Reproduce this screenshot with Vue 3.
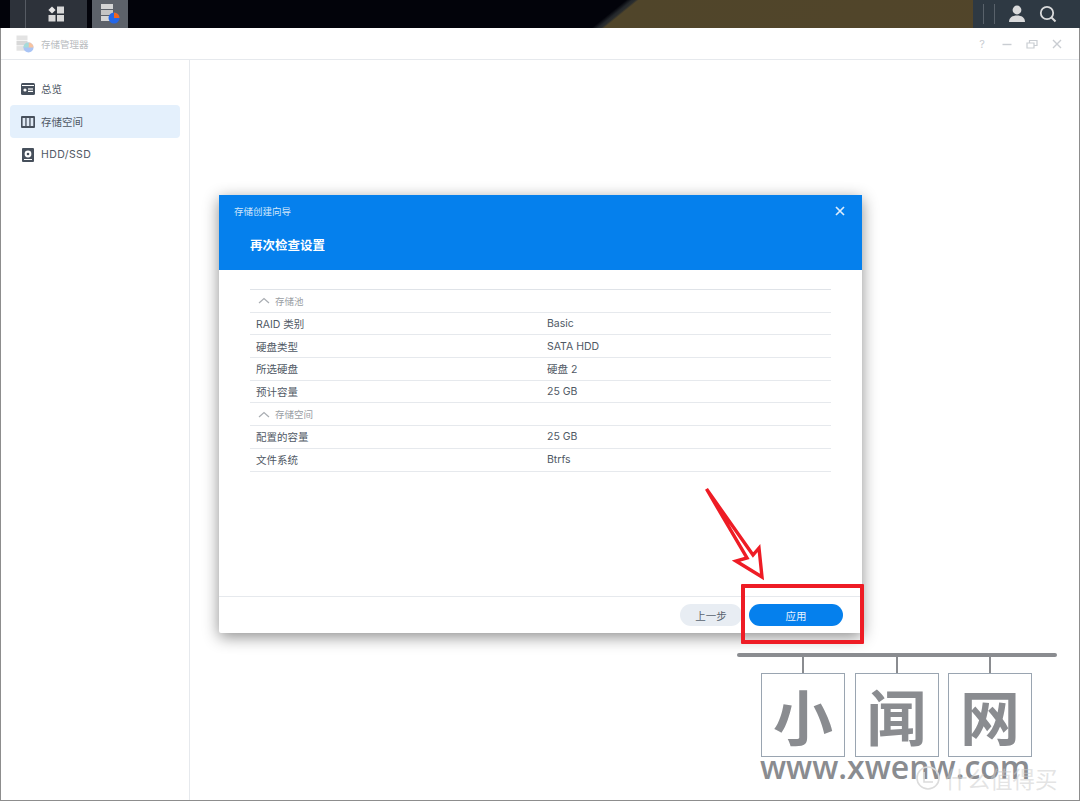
<script setup>
const menu = [
  { id: "overview", label: "总览" },
  { id: "storage", label: "存储空间", active: true },
  { id: "hdd", label: "HDD/SSD" }
];

const sections = [
  {
    title: "存储池",
    rows: [
      ["RAID 类别", "Basic"],
      ["硬盘类型", "SATA HDD"],
      ["所选硬盘", "硬盘 2"],
      ["预计容量", "25 GB"]
    ]
  },
  {
    title: "存储空间",
    rows: [
      ["配置的容量", "25 GB"],
      ["文件系统", "Btrfs"]
    ]
  }
];

const logoChars = ["小", "闻", "网"];
</script>

<template>
  <div class="page">
    <!-- barre du haut -->
    <header class="taskbar">
      <div class="task-group">
        <span class="task-sep"></span>
        <div class="task-main">
          <svg width="18" height="16" viewBox="0 0 18 16">
            <path d="M5 0.5 L8.6 4 L5 7.5 L1.4 4Z" fill="#e6e6e6" />
            <rect x="10" y="0.5" width="7" height="7" fill="#d8d8d8" />
            <rect x="1.5" y="9" width="7" height="6.5" fill="#d8d8d8" />
            <rect x="10" y="9" width="7" height="6.5" fill="#d8d8d8" />
          </svg>
        </div>
      </div>
      <div class="task-app">
        <svg width="20" height="22" viewBox="0 0 20 22">
          <rect x="1" y="1" width="12" height="5" fill="#d5d5d5" />
          <rect x="1" y="7" width="12" height="5" fill="#c4c4c4" />
          <rect x="1" y="13" width="12" height="5" fill="#d5d5d5" />
          <circle cx="14" cy="15" r="5.5" fill="#2467e8" />
          <path d="M14 9.5 A5.5 5.5 0 0 1 19.5 15 L14 15Z" fill="#f0651f" />
        </svg>
      </div>
      <div class="task-right">
        <span class="task-line"></span>
        <span class="task-line"></span>
        <svg class="task-user" width="18" height="18" viewBox="0 0 18 18">
          <circle cx="9" cy="5" r="4.4" fill="#d9dadb" />
          <path d="M1 17 C1 12.5 4.5 10.5 9 10.5 C13.5 10.5 17 12.5 17 17Z" fill="#d9dadb" />
        </svg>
        <svg class="task-search" width="18" height="18" viewBox="0 0 18 18">
          <circle cx="8" cy="8" r="6.2" fill="none" stroke="#d9dadb" stroke-width="1.8" />
          <path d="M12.5 12.5 L16.5 16.5" stroke="#d9dadb" stroke-width="2" />
        </svg>
      </div>
    </header>

    <div class="window">
      <div class="win-head">
        <svg class="win-logo" width="18" height="18" viewBox="0 0 18 18">
          <rect x="0.5" y="0.5" width="11" height="4.6" fill="#e3e3e3" />
          <rect x="0.5" y="5.8" width="11" height="4.6" fill="#d8d8d8" />
          <rect x="0.5" y="11.1" width="11" height="4.6" fill="#e3e3e3" />
          <circle cx="12.5" cy="12.5" r="5" fill="#a9c4f5" />
          <path d="M12.5 7.5 A5 5 0 0 1 17.5 12.5 L12.5 12.5Z" fill="#f7c3a0" />
          <path d="M7.5 12.5 A5 5 0 0 1 12.5 7.5 L12.5 12.5Z" fill="#a5dcd8" />
        </svg>
        <span class="win-title">存储管理器</span>
        <div class="win-actions">
          <span class="win-help">?</span>
          <svg width="12" height="12" viewBox="0 0 12 12"><path d="M1.5 6.5 H10.5" stroke="#c9cdd2" stroke-width="1.4" /></svg>
          <svg width="12" height="12" viewBox="0 0 12 12">
            <path d="M1 5 H8 V10 H1Z M3.5 4.5 V2.5 H11 V7.5 H8.5" fill="none" stroke="#c9cdd2" stroke-width="1.2" />
          </svg>
          <svg width="12" height="12" viewBox="0 0 12 12"><path d="M2 2 L10 10 M10 2 L2 10" stroke="#c9cdd2" stroke-width="1.4" /></svg>
        </div>
      </div>

      <div class="win-body">
        <aside class="sidebar">
          <div v-for="item in menu" :key="item.id" class="menu-item" :class="{ active: item.active, latin: item.id === 'hdd' }">
            <svg v-if="item.id === 'overview'" width="14" height="12" viewBox="0 0 14 12">
              <rect width="14" height="12" rx="1.5" fill="#47505c" />
              <rect x="1" y="2" width="12" height="1" fill="#fff" />
              <circle cx="4" cy="7" r="1.6" fill="#fff" />
              <rect x="7" y="5.4" width="5" height="1.2" fill="#fff" />
              <rect x="7" y="7.8" width="5" height="1.2" fill="#fff" />
            </svg>
            <svg v-else-if="item.id === 'storage'" width="14" height="12" viewBox="0 0 14 12">
              <rect width="14" height="12" rx="1" fill="#47505c" />
              <rect x="1.6" y="2" width="2.7" height="8" fill="#dfe9f4" />
              <rect x="5.6" y="2" width="2.7" height="8" fill="#dfe9f4" />
              <rect x="9.6" y="2" width="2.7" height="8" fill="#dfe9f4" />
            </svg>
            <svg v-else width="12" height="14" viewBox="0 0 12 14">
              <rect width="12" height="14" rx="1" fill="#47505c" />
              <circle cx="6" cy="6" r="3.4" fill="#fff" />
              <circle cx="6" cy="6" r="1.3" fill="#47505c" />
              <rect x="2" y="11" width="8" height="1" fill="#fff" />
            </svg>
            <span>{{ item.label }}</span>
          </div>
        </aside>
        <main class="content"></main>
      </div>
    </div>

    <!-- fenêtre de l'assistant -->
    <section class="dialog">
      <div class="dlg-head">
        <div class="dlg-top">
          <span class="dlg-small">存储创建向导</span>
          <svg width="10" height="10" viewBox="0 0 10 10"><path d="M1 1 L9 9 M9 1 L1 9" stroke="#dcecfc" stroke-width="1.7" /></svg>
        </div>
        <h2 class="dlg-title">再次检查设置</h2>
      </div>

      <div class="dlg-body">
        <div class="summary">
          <template v-for="section in sections" :key="section.title">
            <div class="row section-row">
              <svg width="12" height="7" viewBox="0 0 12 7"><path d="M1 6 L6 1.5 L11 6" fill="none" stroke="#a9adb2" stroke-width="1.2" /></svg>
              <span>{{ section.title }}</span>
            </div>
            <div v-for="row in section.rows" :key="row[0]" class="row">
              <span class="cell-label">{{ row[0] }}</span>
              <span>{{ row[1] }}</span>
            </div>
          </template>
        </div>
      </div>

      <div class="dlg-foot">
        <button class="btn btn-prev">上一步</button>
        <button class="btn btn-apply">应用</button>
      </div>
    </section>

    <!-- annotations rouges -->
    <svg class="arrow" width="70" height="100" viewBox="0 0 70 100">
      <path
        d="M2.5 3 L43 72 L32 75 L58 91 L55 62 L49 69Z"
        fill="#fff"
        stroke="#ee1c25"
        stroke-width="3.4"
        stroke-linejoin="miter"
      />
    </svg>
    <div class="red-box"></div>

    <!-- filigrane -->
    <div class="logo">
      <div class="logo-rail"></div>
      <div class="logo-boxes">
        <div v-for="ch in logoChars" :key="ch" class="logo-cell">
          <span class="logo-tick"></span>
          <div class="logo-box">{{ ch }}</div>
        </div>
      </div>
      <div class="logo-url">www.xwenw.com</div>
    </div>
    <div class="mark">
      <svg width="26" height="26" viewBox="0 0 26 26">
        <circle cx="13" cy="13" r="11" fill="none" stroke="#dcdcdc" stroke-width="1.6" />
        <path d="M9 7 V17 H18" fill="none" stroke="#dcdcdc" stroke-width="1.6" />
      </svg>
      <span>什么值得买</span>
    </div>
  </div>
</template>

<style>
html,
body {
  margin: 0;
  overflow: hidden;
}
</style>

<style scoped>
.page {
  position: relative;
  width: 1080px;
  height: 801px;
  display: flex;
  flex-direction: column;
  overflow: hidden;
  background: #8d8d8d;
  font-family: Inter, "Noto Sans CJK SC", sans-serif;
  color: #4a5460;
}

/* --- BARRE DU HAUT --- */
.taskbar {
  height: 28px;
  flex: none;
  display: flex;
  background: linear-gradient(141deg, #02030a 0 394px, #23272b 398px, #2a2d2e 400px, #50452a 402px, #52452a 100%);
}

.task-group {
  margin-left: 10px;
  width: 77px;
  display: flex;
  background: #2d323a;
}

.task-sep {
  margin-left: 15px;
  width: 1px;
  background: #565b63;
}

.task-main {
  flex: 1;
  display: flex;
  align-items: center;
  justify-content: center;
  padding-right: 2px;
}

.task-app {
  margin-left: 5px;
  width: 36px;
  display: flex;
  align-items: center;
  justify-content: center;
  background: #5d626a;
}

.task-right {
  margin-left: auto;
  width: 107px;
  display: flex;
  align-items: center;
  background: #2e3943;
}

.task-line {
  width: 1px;
  height: 20px;
  margin-left: 10px;
  background: #59626b;
}

.task-user {
  margin-left: 13px;
}

.task-search {
  margin-left: 13px;
}

/* --- FENETRE --- */
.window {
  flex: 1;
  margin: 0 1px 1px 1px;
  display: flex;
  flex-direction: column;
  background: #fff;
  min-height: 0;
}

.win-head {
  height: 31px;
  flex: none;
  display: flex;
  align-items: center;
  padding: 0 15px;
  border-bottom: 1px solid #e6e9ed;
}

.win-title {
  margin-left: 7px;
  font-size: 9.5px;
  color: #b9bcc0;
}

.win-actions {
  margin-left: auto;
  display: flex;
  align-items: center;
  gap: 13px;
  padding-right: 1px;
}

.win-help {
  font-size: 11px;
  line-height: 12px;
  width: 12px;
  text-align: center;
  color: #c9cdd2;
}

.win-body {
  flex: 1;
  display: flex;
  min-height: 0;
}

.sidebar {
  width: 189px;
  flex: none;
  box-sizing: border-box;
  padding: 12px 9px;
  border-right: 1px solid #e6e9ed;
}

.menu-item {
  height: 33px;
  width: 170px;
  display: flex;
  align-items: center;
  gap: 6px;
  box-sizing: border-box;
  padding-left: 11px;
  font-size: 10.5px;
  border-radius: 4px;
  color: #4f5864;
}

.menu-item.latin {
  letter-spacing: 0.4px;
}

.menu-item.active {
  background: #e4f0fc;
}

.menu-item svg {
  width: 14px;
}

.content {
  flex: 1;
}

/* --- DIALOGUE --- */
.dialog {
  position: absolute;
  left: 219px;
  top: 195px;
  width: 643px;
  height: 438px;
  display: flex;
  flex-direction: column;
  background: #fff;
  border-radius: 2px;
  box-shadow: 0 4px 16px rgba(0, 0, 0, 0.45);
}

.dlg-head {
  height: 75px;
  flex: none;
  box-sizing: border-box;
  padding: 8px 17px 0 15px;
  background: #0580ed;
  color: #fff;
}

.dlg-top {
  display: flex;
  align-items: center;
  justify-content: space-between;
  height: 15px;
}

.dlg-small {
  font-size: 9.5px;
  color: #cfe5fa;
}

.dlg-title {
  margin: 19px 0 0 16px;
  font-size: 12.5px;
  line-height: 18px;
  font-weight: 700;
}

.dlg-body {
  flex: 1;
  padding: 19px 31px 0 31px;
}

.summary {
  border-top: 1px solid #dfe3e8;
}

.row {
  height: 22.7px;
  box-sizing: border-box;
  display: flex;
  align-items: center;
  padding-left: 6px;
  font-size: 10.5px;
  color: #4f5864;
  border-bottom: 1px solid #e6e9ed;
}

.cell-label {
  width: 291px;
}

.section-row {
  padding-left: 8px;
  gap: 5px;
  font-size: 9.5px;
  color: #9a9ea4;
}

.dlg-foot {
  height: 36px;
  flex: none;
  display: flex;
  justify-content: flex-end;
  align-items: center;
  gap: 7px;
  padding: 0 19px 0 0;
  border-top: 1px solid #e6e9ed;
}

.btn {
  height: 22px;
  border: none;
  border-radius: 11px;
  font-family: inherit;
  font-size: 10.5px;
  padding: 0;
}

.btn-prev {
  width: 62px;
  background: #e8edf3;
  color: #5a6470;
}

.btn-apply {
  width: 94px;
  background: #0580ed;
  color: #e8f3fd;
}

/* --- ANNOTATIONS --- */
.arrow {
  position: absolute;
  left: 704px;
  top: 486px;
}

.red-box {
  position: absolute;
  left: 741px;
  top: 584px;
  width: 123px;
  height: 60px;
  box-sizing: border-box;
  border: 4px solid #ee1c25;
  border-radius: 1px;
}

/* --- FILIGRANE --- */
.logo {
  position: absolute;
  left: 737px;
  top: 653px;
  width: 320px;
  color: #8a8c90;
}

.logo-rail {
  height: 4px;
  border-radius: 2px;
  background: #8a8c90;
}

.logo-boxes {
  display: flex;
  gap: 9.5px;
  margin-left: 24px;
}

.logo-cell {
  display: flex;
  flex-direction: column;
  align-items: center;
}

.logo-tick {
  width: 2px;
  height: 16px;
  background: #8a8c90;
}

.logo-box {
  width: 84px;
  height: 84px;
  box-sizing: border-box;
  border: 1px solid #9aa5b1;
  background: #fff;
  display: flex;
  align-items: center;
  justify-content: center;
  font-family: "Noto Sans CJK SC", sans-serif;
  font-size: 60px;
  line-height: 1;
  font-weight: 700;
}

.logo-url {
  margin: 0 0 0 23px;
  width: 290px;
  height: 24px;
  font-family: "Open Sans", sans-serif;
  font-size: 32px;
  line-height: 20px;
  font-weight: 600;
  white-space: nowrap;
}

.mark {
  position: absolute;
  left: 915px;
  top: 765px;
  display: flex;
  align-items: center;
  gap: 4px;
  font-family: "Noto Sans CJK SC", sans-serif;
  font-size: 22.5px;
  line-height: 26px;
  color: rgba(205, 205, 205, 0.55);
  white-space: nowrap;
}
</style>
